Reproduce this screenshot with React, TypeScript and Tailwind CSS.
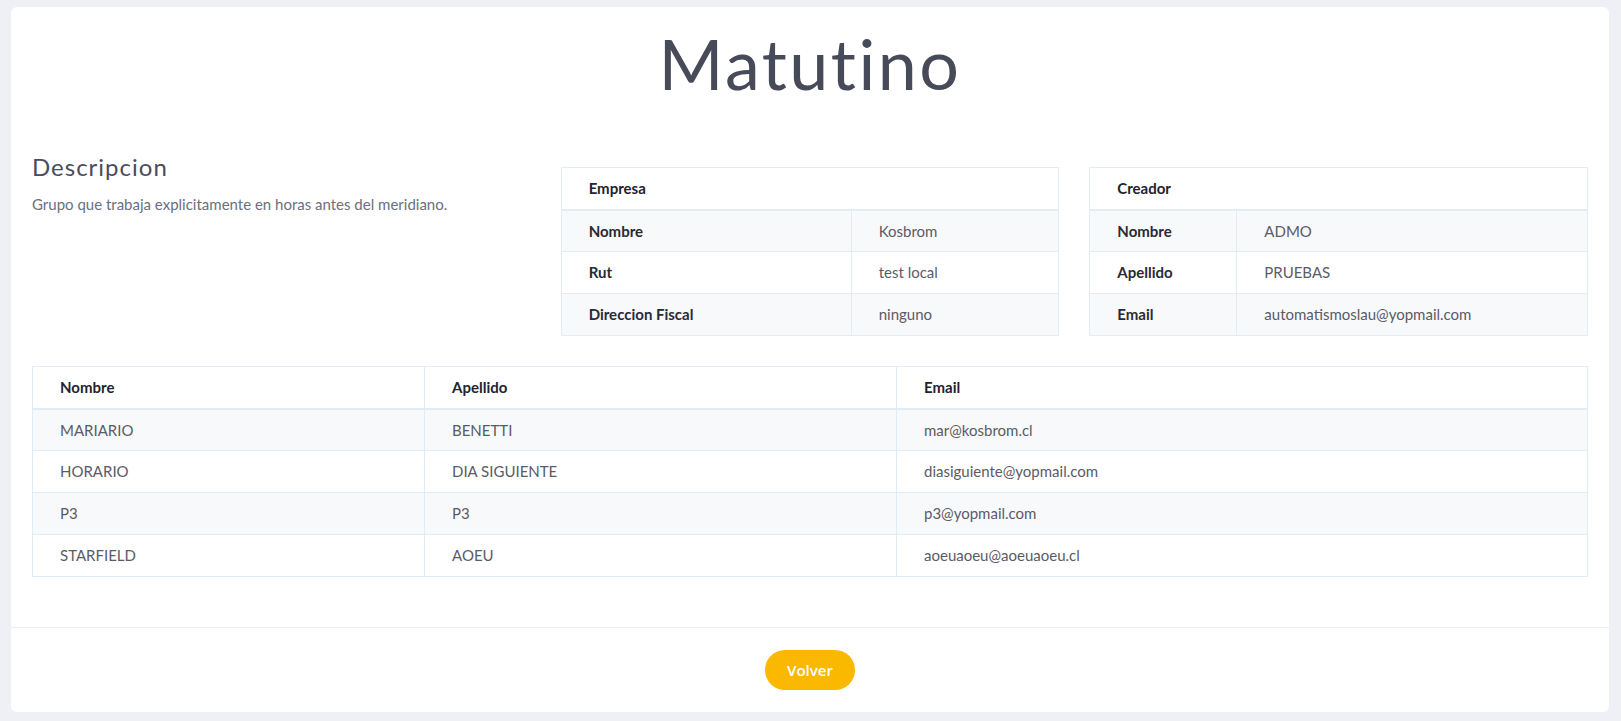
import React from "react";

interface Row {
  label: string;
  value: string;
}

const empresa: Row[] = [
  { label: "Nombre", value: "Kosbrom" },
  { label: "Rut", value: "test local" },
  { label: "Direccion Fiscal", value: "ninguno" },
];

const creador: Row[] = [
  { label: "Nombre", value: "ADMO" },
  { label: "Apellido", value: "PRUEBAS" },
  { label: "Email", value: "automatismoslau@yopmail.com" },
];

const miembros = [
  { nombre: "MARIARIO", apellido: "BENETTI", email: "mar@kosbrom.cl" },
  { nombre: "HORARIO", apellido: "DIA SIGUIENTE", email: "diasiguiente@yopmail.com" },
  { nombre: "P3", apellido: "P3", email: "p3@yopmail.com" },
  { nombre: "STARFIELD", apellido: "AOEU", email: "aoeuaoeu@aoeuaoeu.cl" },
];

const th = "h-[42px] border border-[#e3ebf3] border-b-2 pl-[27px] text-left font-bold text-[#23232f]";
const td = "h-[42px] border border-[#e3ebf3] pl-[27px] text-left";

/* ===== Info table (Empresa / Creador) ===== */
function InfoTable({
  title,
  rows,
  labelWidth,
}: {
  title: string;
  rows: Row[];
  labelWidth: string;
}) {
  return (
    <table className="w-full border-collapse text-[15px]">
      <colgroup>
        <col className={labelWidth} />
        <col />
      </colgroup>
      <thead>
        <tr>
          <th colSpan={2} className={th}>
            {title}
          </th>
        </tr>
      </thead>
      <tbody>
        {rows.map((r, i) => (
          <tr key={r.label} className={i % 2 === 0 ? "bg-[#f8f9fb]" : "bg-white"}>
            <td className={`${td} font-bold text-[#2a2a35]`}>{r.label}</td>
            <td className={`${td} text-[#5b5b66]`}>{r.value}</td>
          </tr>
        ))}
      </tbody>
    </table>
  );
}

export default function App() {
  return (
    <div className="min-h-screen bg-[#eef0f6] pt-[7px] pb-[9px] pl-[11px] pr-[12px] font-['Lato',sans-serif]">
      <div className="rounded-md bg-white">
        {/* BODY */}
        <div className="px-[21px] pb-[50px]">
          <h1 className="pt-[8px] text-center text-[70px] font-normal leading-[96px] tracking-[2.5px] text-[#474a59]">
            Matutino
          </h1>

          <div className="mt-[52px] grid grid-cols-3 gap-[30px] items-start">
            <div>
              <h2 className="-mt-[10px] text-[24px] font-normal leading-[28px] tracking-[1px] text-[#4a4d5c]">
                Descripcion
              </h2>
              <p className="mt-[12px] text-[15px] text-[#6b6f80]">
                Grupo que trabaja explicitamente en horas antes del meridiano.
              </p>
            </div>
            <div className="mt-[4px]">
              <InfoTable title="Empresa" rows={empresa} labelWidth="w-[290px]" />
            </div>
            <div className="mt-[4px]">
              <InfoTable title="Creador" rows={creador} labelWidth="w-[147px]" />
            </div>
          </div>

          {/* MIEMBROS */}
          <table className="mt-[30px] w-full border-collapse text-[15px]">
            <colgroup>
              <col className="w-[392px]" />
              <col className="w-[472px]" />
              <col />
            </colgroup>
            <thead>
              <tr>
                <th className={th}>Nombre</th>
                <th className={th}>Apellido</th>
                <th className={th}>Email</th>
              </tr>
            </thead>
            <tbody>
              {miembros.map((m, i) => (
                <tr key={m.nombre} className={i % 2 === 0 ? "bg-[#f8f9fb]" : "bg-white"}>
                  <td className={`${td} text-[#5b5b66]`}>{m.nombre}</td>
                  <td className={`${td} text-[#5b5b66]`}>{m.apellido}</td>
                  <td className={`${td} text-[#5b5b66]`}>{m.email}</td>
                </tr>
              ))}
            </tbody>
          </table>
        </div>

        {/* FOOTER */}
        <div className="flex justify-center border-t border-[#eceef3] py-[22px]">
          <button className="h-[40px] w-[90px] rounded-full bg-[#fbb800] font-['Open_Sans',sans-serif] text-[15px] font-semibold text-white">
            Volver
          </button>
        </div>
      </div>
    </div>
  );
}
